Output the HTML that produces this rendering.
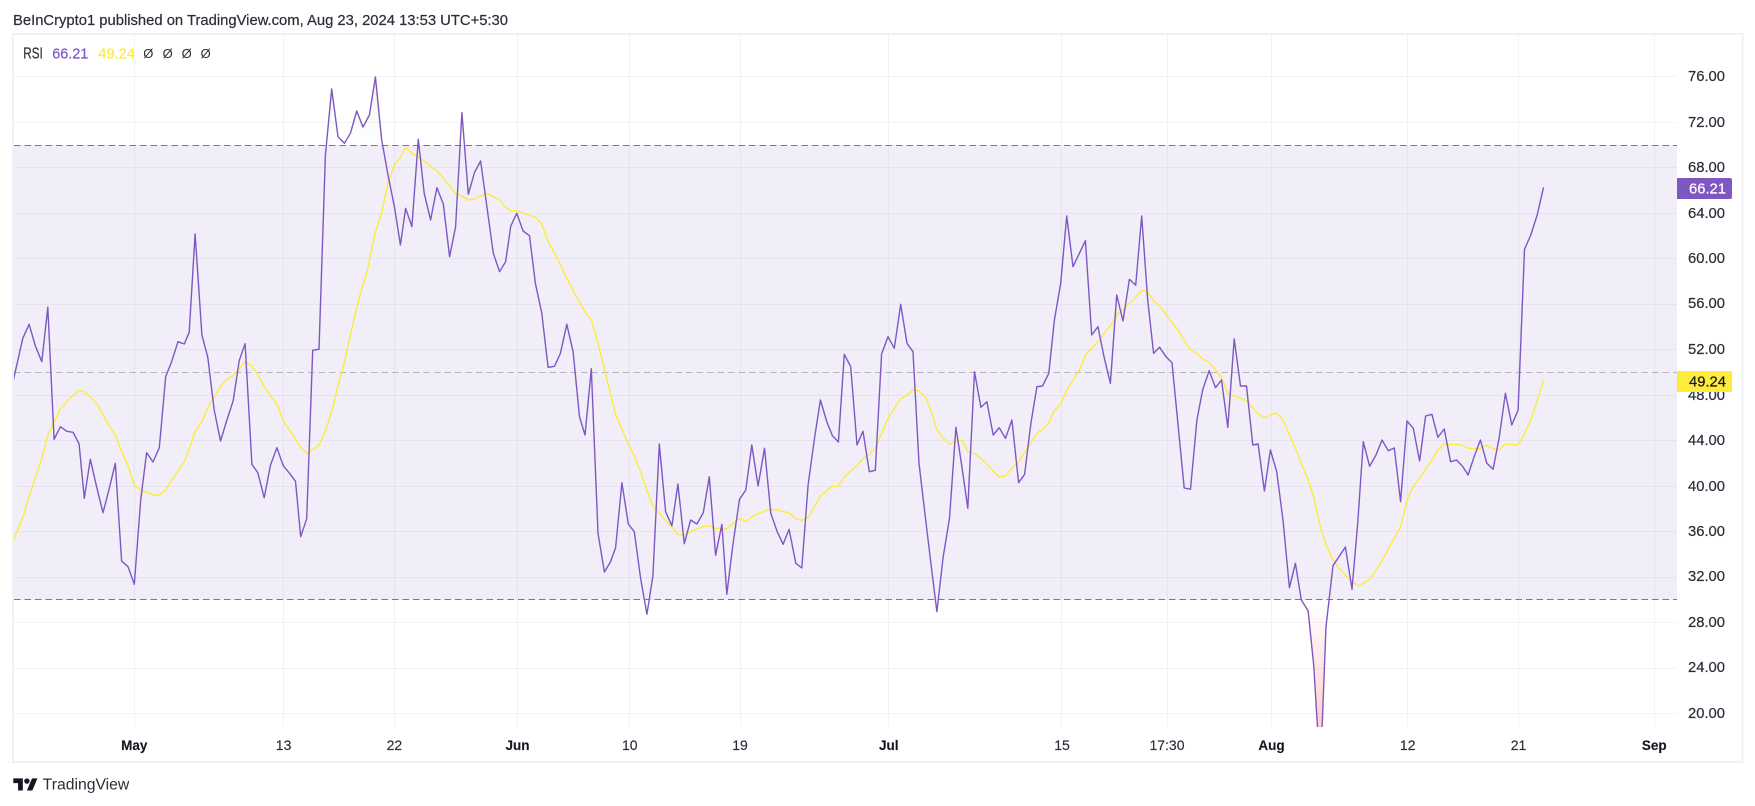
<!DOCTYPE html>
<html><head><meta charset="utf-8"><title>RSI</title>
<style>
html,body{margin:0;padding:0;background:#fff;width:1755px;height:806px;overflow:hidden}
svg{display:block}
text{font-family:"Liberation Sans",Arial,sans-serif;font-size:13px;fill:#131722}
.p{text-anchor:start;font-size:14.5px;fill:#2a2e39;stroke:#2a2e39;stroke-width:.2}
.t{text-anchor:middle;font-size:14px;fill:#2a2e39;stroke:#2a2e39;stroke-width:.15}
.b{font-weight:bold;fill:#131722;font-size:13.5px}
.o{font-size:13px;text-anchor:middle;fill:#2a2e39}
</style></head><body>
<svg width="1755" height="806" viewBox="0 0 1755 806" xmlns="http://www.w3.org/2000/svg">
<defs>
<clipPath id="c"><rect x="14" y="35" width="1663" height="692"/></clipPath>
<linearGradient id="g" gradientUnits="userSpaceOnUse" x1="0" y1="76" x2="0" y2="145"><stop offset="0" stop-color="#4caf50" stop-opacity=".1"/><stop offset="1" stop-color="#4caf50" stop-opacity="0"/></linearGradient>
<linearGradient id="r" gradientUnits="userSpaceOnUse" x1="0" y1="600" x2="0" y2="727"><stop offset="0" stop-color="#ff5252" stop-opacity="0"/><stop offset="1" stop-color="#ff5252" stop-opacity=".28"/></linearGradient>
</defs>
<rect x="13" y="34" width="1729.5" height="728" fill="#fff" stroke="#f0f0f7" stroke-width="2"/>
<rect x="14" y="145" width="1663" height="455" fill="#f1eef9"/>
<g stroke="#64648c" stroke-opacity=".08" stroke-width="1" shape-rendering="crispEdges">
<path d="M14 76.5H1677M14 122.5H1677M14 167.5H1677M14 213.5H1677M14 258.5H1677M14 304.5H1677M14 349.5H1677M14 395.5H1677M14 440.5H1677M14 486.5H1677M14 531.5H1677M14 577.5H1677M14 622.5H1677M14 668.5H1677M14 713.5H1677"/>
<path d="M134.5 35V727M283.5 35V727M394.5 35V727M517.5 35V727M629.5 35V727M740.5 35V727M888.5 35V727M1061.5 35V727M1167.5 35V727M1271.5 35V727M1407.5 35V727M1518.5 35V727M1654.5 35V727"/>
</g>
<path d="M325.7 145L331.7 89L338 136.7L344.4 143.3L350.4 133.3L356.7 111L363 127L369.4 115L375.4 77L382.6 145ZM417.8 145L418.3 139.3L419 145ZM460.1 145L461.9 112.7L463.6 145Z" fill="url(#g)"/>
<g clip-path="url(#c)">
<path d="M1301.3 600L1308.1 610.7L1313.7 665L1320.3 774L1326 626.7L1329 600ZM642 600L646.9 614.3L650 600ZM932.5 600L936.9 611.7L939 600Z" fill="url(#r)"/>
</g>
<g stroke-width="1" shape-rendering="crispEdges" fill="none">
<path d="M14 145.5H1677M14 599.5H1677" stroke="#787b86" stroke-dasharray="6.5 4"/>
<path d="M14 372.5H1677" stroke="#787b86" stroke-opacity=".5" stroke-dasharray="6.5 4"/>
</g>
<g clip-path="url(#c)" fill="none" stroke-linejoin="round">
<polyline stroke="#ffeb3b" stroke-width="1.4" points="13.4,540 23.1,516.7 29.1,496.7 35.4,476.7 41.8,458.3 47.8,435 54.1,421.7 60.4,409 66.8,401.7 73.1,395 79.1,390.3 84.3,391.7 90.7,397.3 97,404 103,415 109.3,426 115.7,435.7 121.6,451.7 128,465.7 134.3,485 140.7,490 146.6,492.3 153,494.7 159.3,495.3 165.7,490 171.6,480 178,471 184.3,461.7 190.3,446.7 195.1,431.3 201.9,421.7 209,405 214.5,396.7 220.9,385.7 226.9,379.3 233.2,375.7 239.2,368.7 245.1,361.7 251.9,366 257.5,374 264.2,386.7 270.5,396 276.9,404 283.6,421.7 289.6,430 295.5,438.3 300.7,447.7 307.1,453.3 313.4,449 319.4,445 325.7,430 331.7,411.7 337.7,386.7 343.3,366.7 348.9,341.7 354.5,316.7 360,295 367.5,270 375,233.3 380.6,216.7 388,183.3 394.4,165 400.4,157.3 405.6,147.7 411.9,153.3 418.3,156.7 424.2,161 430.6,166.7 436.9,170.7 443.3,178.3 449.6,186 455.6,193.3 461.9,196 468.3,200 474.6,199.3 480.6,196 486.9,193.3 493.3,196.7 499.6,200 505.6,207.3 510.8,210.7 516.8,210.7 523.1,213.3 529.5,215.3 535.4,217.3 541.8,224 548.1,241.7 554.5,253.3 561.6,266.7 563.4,271.7 574.6,293.3 585,311.7 591.7,320.7 598,343.3 605.5,373.3 609.6,390 615.6,414.3 621.9,429.3 628.3,444 634.3,456 640.6,471.7 646.9,490.7 653.3,506.7 659.3,513.3 665.6,520.7 671.9,526.7 677.9,534.3 684.3,535.3 690.6,531.3 696.9,529 703.3,526.3 709.3,526 715.6,528.3 726.8,528.7 733.1,523.3 739.5,518.3 745.8,521.7 751.8,517 758.1,513.7 764.5,511 770.8,509.3 777.2,510.3 783.1,511.7 789.1,512.7 795.8,519 801.8,520.3 808.1,517.7 814.5,506.7 820.4,496 826.8,490.7 832.4,486.3 838.4,486.3 844.3,476.7 850.7,471 857,466 863,458.7 869.3,454 875.3,448.3 881.6,433.3 888,418.3 894.3,408.3 900.7,399 907,395 913,390 919,391 925.7,397.3 931.3,411.7 936.9,430 943.2,438.3 949.5,444.3 955.9,441 961.9,440.3 967.8,451.7 974.5,453.7 980.9,458.3 986.9,464.3 993.2,471 999.2,477 1005.5,476 1011.9,468.3 1017.8,462.7 1024.6,452.3 1030.9,442.7 1036.9,433.3 1042.5,429.3 1047.7,424.3 1054.4,410.7 1060.7,404.3 1066.7,390 1073,380 1079.4,370 1085.4,355 1091.7,348.3 1099.9,340 1105.7,331 1112,324 1118,313.3 1123,310 1129.4,303.3 1135.7,297.3 1141.7,290.7 1146.5,290.7 1153.6,300.7 1159.6,306 1166,314.3 1170,320 1178.2,330 1184.9,341.7 1190.5,350 1196.9,353.3 1202.8,359.3 1209.2,362.3 1215.5,370 1221.5,377.3 1227.8,393.3 1234.2,396 1240.5,398.3 1246.5,400.7 1252.8,407.7 1258.8,414.3 1264.4,417.7 1270.4,414.7 1276.7,413.3 1283,420 1289.4,435 1295.4,448.3 1301.3,463.3 1308.1,480 1313.7,497.3 1321.1,530 1326.7,546 1333,560 1339,568.3 1345.4,575 1352,581.7 1358.4,585.7 1363.3,583.3 1369.6,579.3 1376,570 1382,560.7 1388.3,549.3 1394.3,538.3 1400.6,526.7 1407,500 1413.3,486.7 1419.6,478.3 1425.6,469.3 1431.9,460 1437.9,450 1444.2,443.7 1450.6,444.7 1456.6,444.3 1462.9,445.3 1468.1,448.3 1474.1,448.7 1480.4,448.3 1486.8,445.3 1493.1,448.7 1499.1,449.3 1505.4,444.3 1518.1,445 1524.5,433.3 1530.8,420 1537.5,400 1543.5,380"/>
<polyline stroke="#7e57c2" stroke-width="1.4" points="13.4,380 22.8,338.3 29.1,324.3 35.4,346 41.8,361.7 47.8,307.3 54.1,439.3 60.4,426.7 66.8,431.3 73.1,432.3 79.1,444 84.3,498.3 90.3,459.3 96.6,486.7 103,512.7 109.3,488.3 115.3,463.3 121.6,561 128,566.7 134.3,584.3 140.7,500 146.6,452.7 153,462 159.3,447.7 165.7,376.7 171.6,361.7 178,341.7 184.3,344 189.2,332.3 195.1,234 201.9,335 207.8,357.3 214.2,410 220.5,441 226.9,420 233.2,400.7 239.2,360.7 245.1,343.7 251.9,464.3 257.8,472.7 264.2,497.7 270.5,465 276.9,447.7 283.2,465.7 289.6,473.3 295.5,481.3 300.7,536.7 306.7,518.7 312.7,350.3 319,349.3 325.4,155 331.7,89 338,136.7 344.4,143.3 350.4,133.3 356.7,111 363,127 369.4,115 375.4,77 381.7,140 388,175 394.4,206.7 400.4,245 405.6,208.3 411.9,226.7 418.3,139.3 424.2,193.3 430.6,220 436.9,187.7 443.3,204 449.6,256.7 455.6,226.7 461.9,112.7 468.3,194.3 474.6,172.3 480.6,161 486.9,206.7 493.3,253.3 499.6,271.7 505.6,261.7 510.8,226 516.8,213.3 523.1,231 529.5,235.7 535.4,283.3 541.8,313.3 548.1,367.3 554.5,366.3 560.4,353.3 566.8,324.3 573.1,351.7 579.5,416.7 585,435 591.3,368.7 598,533.3 604.4,572 610.4,562 615.6,547.7 621.9,482.7 628.3,524 634.3,531.7 640.6,578.3 646.9,614.3 652.9,576 659.3,444 665.6,511.7 671.9,525.7 677.9,484 684.3,543.7 690.6,520 696.9,524 703.3,512.7 709.3,476.7 715.6,555.3 721.9,524.3 726.8,594.3 733.1,543.3 739.5,499.3 745.8,490 751.8,445 758.1,486 764.5,448.3 770.8,513.3 777.2,531.7 783.1,544.3 789.1,529.3 795.8,563.3 801.8,568 808.1,485 814.5,438.3 820.4,400 826.8,421.7 832.4,435.7 838.4,442 844.3,354.3 850.7,366.7 857,445 863,431.3 869.3,471.7 875.3,470.3 881.6,354 888,336.7 894.3,348.3 900.7,304.3 907,343.3 913,351.7 919,463.3 925.3,516.7 931.3,566.7 936.9,611.7 943.2,556.7 949.5,518.3 955.9,427.3 961.9,466.7 967.8,508.3 974.5,371.7 980.9,407.3 986.9,401.7 993.2,435 999.2,427.7 1005.5,438.3 1011.9,420 1018.6,482.7 1024.6,474.3 1030.9,423.3 1036.9,386.7 1042.5,386 1048.8,373.3 1054.4,320 1060.7,283.3 1066.7,216 1073,266.7 1085.4,240.7 1091.7,335 1098,326.7 1104,356.7 1110.4,383.3 1116.7,295 1123,321 1129.4,279.3 1135.7,285.3 1141.7,216 1147.7,300 1153.6,353.3 1159.6,347.3 1166,356.7 1172,362.7 1184.2,488 1190.5,489.3 1196.9,420 1202.8,389.3 1209.2,370.7 1215.5,387.7 1221.5,380 1227.8,427.3 1234.2,339 1240.5,386 1246.5,386 1252.8,445 1258.1,444 1264.4,491 1270.4,450 1276.7,471.7 1283,520 1289.4,587.7 1295.4,563.3 1301.3,600 1308.1,610.7 1313.7,665 1320.3,774 1326,626.7 1333,565.7 1339,556.7 1345.4,547 1352,589.3 1357.7,523.3 1363.3,441.7 1369.6,466.3 1376,455 1382,440 1388.3,450.7 1394.3,448 1400.6,501.7 1407,421 1413.3,428.3 1419.6,461 1425.6,416 1431.9,414.3 1437.9,437.3 1444.2,429 1450.6,461.7 1456.6,460 1462.9,466.7 1468.1,475 1474.1,456.7 1480.4,440 1486.8,463.3 1493.1,469.3 1499.1,438.3 1505.4,393.3 1511.8,425 1518.1,410 1524.5,249.3 1530.8,235 1537.2,215 1543.5,187.3"/>
</g>
<text x="13" y="25" class="p" style="font-size:15px" textLength="495" lengthAdjust="spacingAndGlyphs">BeInCrypto1 published on TradingView.com, Aug 23, 2024 13:53 UTC+5:30</text>
<text x="23.3" y="58.5" class="p" style="font-size:15.5px" textLength="19.5" lengthAdjust="spacingAndGlyphs">RSI</text>
<text x="52.3" y="58.5" class="p" style="font-size:15px;fill:#7e57c2;stroke:#7e57c2" textLength="36" lengthAdjust="spacingAndGlyphs">66.21</text>
<text x="98.3" y="58.5" class="p" style="font-size:15px;fill:#ffeb3b;stroke:#ffeb3b" textLength="36.7" lengthAdjust="spacingAndGlyphs">49.24</text>
<text x="148.3" y="58" class="o">Ø</text>
<text x="167.7" y="58" class="o">Ø</text>
<text x="186.7" y="58" class="o">Ø</text>
<text x="205.7" y="58" class="o">Ø</text>
<g>
<text x="1688" y="81" class="p" textLength="37" lengthAdjust="spacingAndGlyphs">76.00</text>
<text x="1688" y="127" class="p" textLength="37" lengthAdjust="spacingAndGlyphs">72.00</text>
<text x="1688" y="172" class="p" textLength="37" lengthAdjust="spacingAndGlyphs">68.00</text>
<text x="1688" y="218" class="p" textLength="37" lengthAdjust="spacingAndGlyphs">64.00</text>
<text x="1688" y="263" class="p" textLength="37" lengthAdjust="spacingAndGlyphs">60.00</text>
<text x="1688" y="308" class="p" textLength="37" lengthAdjust="spacingAndGlyphs">56.00</text>
<text x="1688" y="354" class="p" textLength="37" lengthAdjust="spacingAndGlyphs">52.00</text>
<text x="1688" y="400" class="p" textLength="37" lengthAdjust="spacingAndGlyphs">48.00</text>
<text x="1688" y="445" class="p" textLength="37" lengthAdjust="spacingAndGlyphs">44.00</text>
<text x="1688" y="491" class="p" textLength="37" lengthAdjust="spacingAndGlyphs">40.00</text>
<text x="1688" y="536" class="p" textLength="37" lengthAdjust="spacingAndGlyphs">36.00</text>
<text x="1688" y="581" class="p" textLength="37" lengthAdjust="spacingAndGlyphs">32.00</text>
<text x="1688" y="627" class="p" textLength="37" lengthAdjust="spacingAndGlyphs">28.00</text>
<text x="1688" y="672" class="p" textLength="37" lengthAdjust="spacingAndGlyphs">24.00</text>
<text x="1688" y="718" class="p" textLength="37" lengthAdjust="spacingAndGlyphs">20.00</text>
</g>
<path d="M1677 178H1730a2 2 0 0 1 2 2V197a2 2 0 0 1-2 2H1677Z" fill="#7e57c2"/>
<text x="1689" y="193.5" class="p" style="fill:#fff;stroke:#fff" textLength="37" lengthAdjust="spacingAndGlyphs">66.21</text>
<path d="M1677 371H1730a2 2 0 0 1 2 2V390a2 2 0 0 1-2 2H1677Z" fill="#ffeb3b"/>
<text x="1689" y="386.5" class="p" style="fill:#131722;stroke:#131722" textLength="37" lengthAdjust="spacingAndGlyphs">49.24</text>
<text x="134.3" y="750" class="t b">May</text>
<text x="283.6" y="750" class="t">13</text>
<text x="394.4" y="750" class="t">22</text>
<text x="517.5" y="750" class="t b">Jun</text>
<text x="629.8" y="750" class="t">10</text>
<text x="740" y="750" class="t">19</text>
<text x="888.7" y="750" class="t b">Jul</text>
<text x="1062" y="750" class="t">15</text>
<text x="1167" y="750" class="t">17:30</text>
<text x="1271.5" y="750" class="t b">Aug</text>
<text x="1407.7" y="750" class="t">12</text>
<text x="1518.5" y="750" class="t">21</text>
<text x="1654.3" y="750" class="t b">Sep</text>
<g transform="translate(13.3 775.6) scale(.68)" fill="#131722"><path d="M14 22H7V11H0V4h14v18zM28 22h-8l7.5-18h8L28 22z"/><circle cx="20" cy="8" r="4"/></g>
<text x="42.7" y="789.5" style="font-size:15.5px;fill:#2a2e39" textLength="86.6" lengthAdjust="spacingAndGlyphs">TradingView</text>
</svg>
</body></html>
